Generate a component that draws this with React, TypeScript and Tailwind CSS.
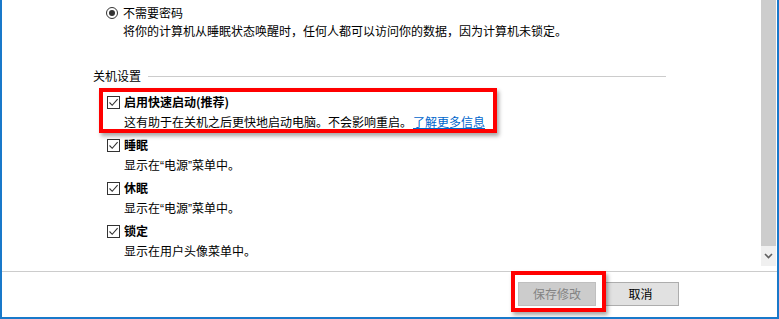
import React from "react";

const font = { fontFamily: '"Noto Sans CJK SC", "Microsoft YaHei", sans-serif' };

function CheckBox() {
  return (
    <div className="w-[13px] h-[13px] border border-[#333333] bg-white flex items-center justify-center shrink-0">
      <svg width="11" height="11" viewBox="0 0 11 11">
        <path d="M1.5 5.5 L4.2 8.3 L9.6 2.2" fill="none" stroke="#333333" strokeWidth="1.1" />
      </svg>
    </div>
  );
}

function Radio() {
  return (
    <div className="w-[12px] h-[12px] rounded-full border border-[#333333] bg-white flex items-center justify-center shrink-0">
      <div className="w-[6px] h-[6px] rounded-full bg-[#333333]" />
    </div>
  );
}

function Q({ c }: { c: string }) {
  return <span style={{ fontFamily: '"Liberation Sans", Arial, sans-serif' }}>{c}</span>;
}

function Item({ title, desc, top }: { title: string; desc: React.ReactNode; top: string }) {
  return (
    <div className={top}>
      <div className="flex items-center h-[20px] pl-[105px]">
        <CheckBox />
        <span className="ml-[4px] font-bold text-[12px] leading-[20px] text-black">{title}</span>
      </div>
      <div className="pl-[122px] text-[12px] leading-[18px] mt-[1px] text-black">{desc}</div>
    </div>
  );
}

export default function App() {
  const power = (
    <>
      显示在<Q c="“" />电源<Q c="”" />菜单中。
    </>
  );
  return (
    <div
      className="relative w-[779px] h-[319px] overflow-hidden bg-white border-l-2 border-r-2 border-b-2 border-[#1979ca] flex flex-col"
      style={font}
    >
      <div className="flex h-[271px]">
        <div className="flex-1">
          <div className="flex items-center h-[18px] mt-[4px] pl-[104px]">
            <Radio />
            <span className="ml-[5px] text-[12px] leading-[18px] text-black">不需要密码</span>
          </div>
          <div className="pl-[121px] text-[12px] leading-[18px] text-black">
            将你的计算机从睡眠状态唤醒时，任何人都可以访问你的数据，因为计算机未锁定。
          </div>
          <div className="flex items-center mt-[27px] ml-[91px] w-[573px] h-[18px]">
            <span className="text-[12px] leading-[18px] text-black">关机设置</span>
            <div className="flex-1 ml-[7px] h-px bg-[#cccccc]" />
          </div>
          <Item
            top="mt-[7px]"
            title="启用快速启动(推荐)"
            desc={
              <>
                这有助于在关机之后更快地启动电脑。不会影响重启。
                <span className="ml-[1px] text-[#0066cc] underline">了解更多信息</span>
              </>
            }
          />
          <Item top="mt-[4px]" title="睡眠" desc={power} />
          <Item top="mt-[3px]" title="休眠" desc={power} />
          <Item top="mt-[3px]" title="锁定" desc="显示在用户头像菜单中。" />
        </div>
        <div className="w-[15px] mr-[1px] flex flex-col">
          <div className="h-[246px] bg-[#cdcdcd]" />
          <div className="h-[20px] bg-[#f0f0f0] flex items-center justify-center">
            <svg width="9" height="6" viewBox="0 0 9 6">
              <path d="M1 1 L4.5 4.5 L8 1" fill="none" stroke="#606060" strokeWidth="1.6" />
            </svg>
          </div>
          <div className="flex-1" />
        </div>
      </div>
      <div className="h-px bg-[#cccccc]" />
      <div className="flex-1 flex items-start pt-[10px] pl-[516px] gap-[6px]">
        <div className="w-[78px] h-[24px] bg-[#cccccc] border border-[#bfbfbf] flex items-center justify-center text-[12px] text-[#838383]">
          保存修改
        </div>
        <div className="w-[77px] h-[24px] bg-[#e1e1e1] border border-[#adadad] flex items-center justify-center text-[12px] text-black">
          取消
        </div>
      </div>

      <div className="absolute left-[97px] top-[88px] w-[398px] h-[45px] border-4 border-[#ff0000] shadow-[2px_3px_4px_rgba(0,0,0,0.35)] pointer-events-none" />
      <div className="absolute left-[509px] top-[271px] w-[95px] h-[41px] border-4 border-[#ff0000] shadow-[2px_3px_4px_rgba(0,0,0,0.35)] pointer-events-none" />
    </div>
  );
}
